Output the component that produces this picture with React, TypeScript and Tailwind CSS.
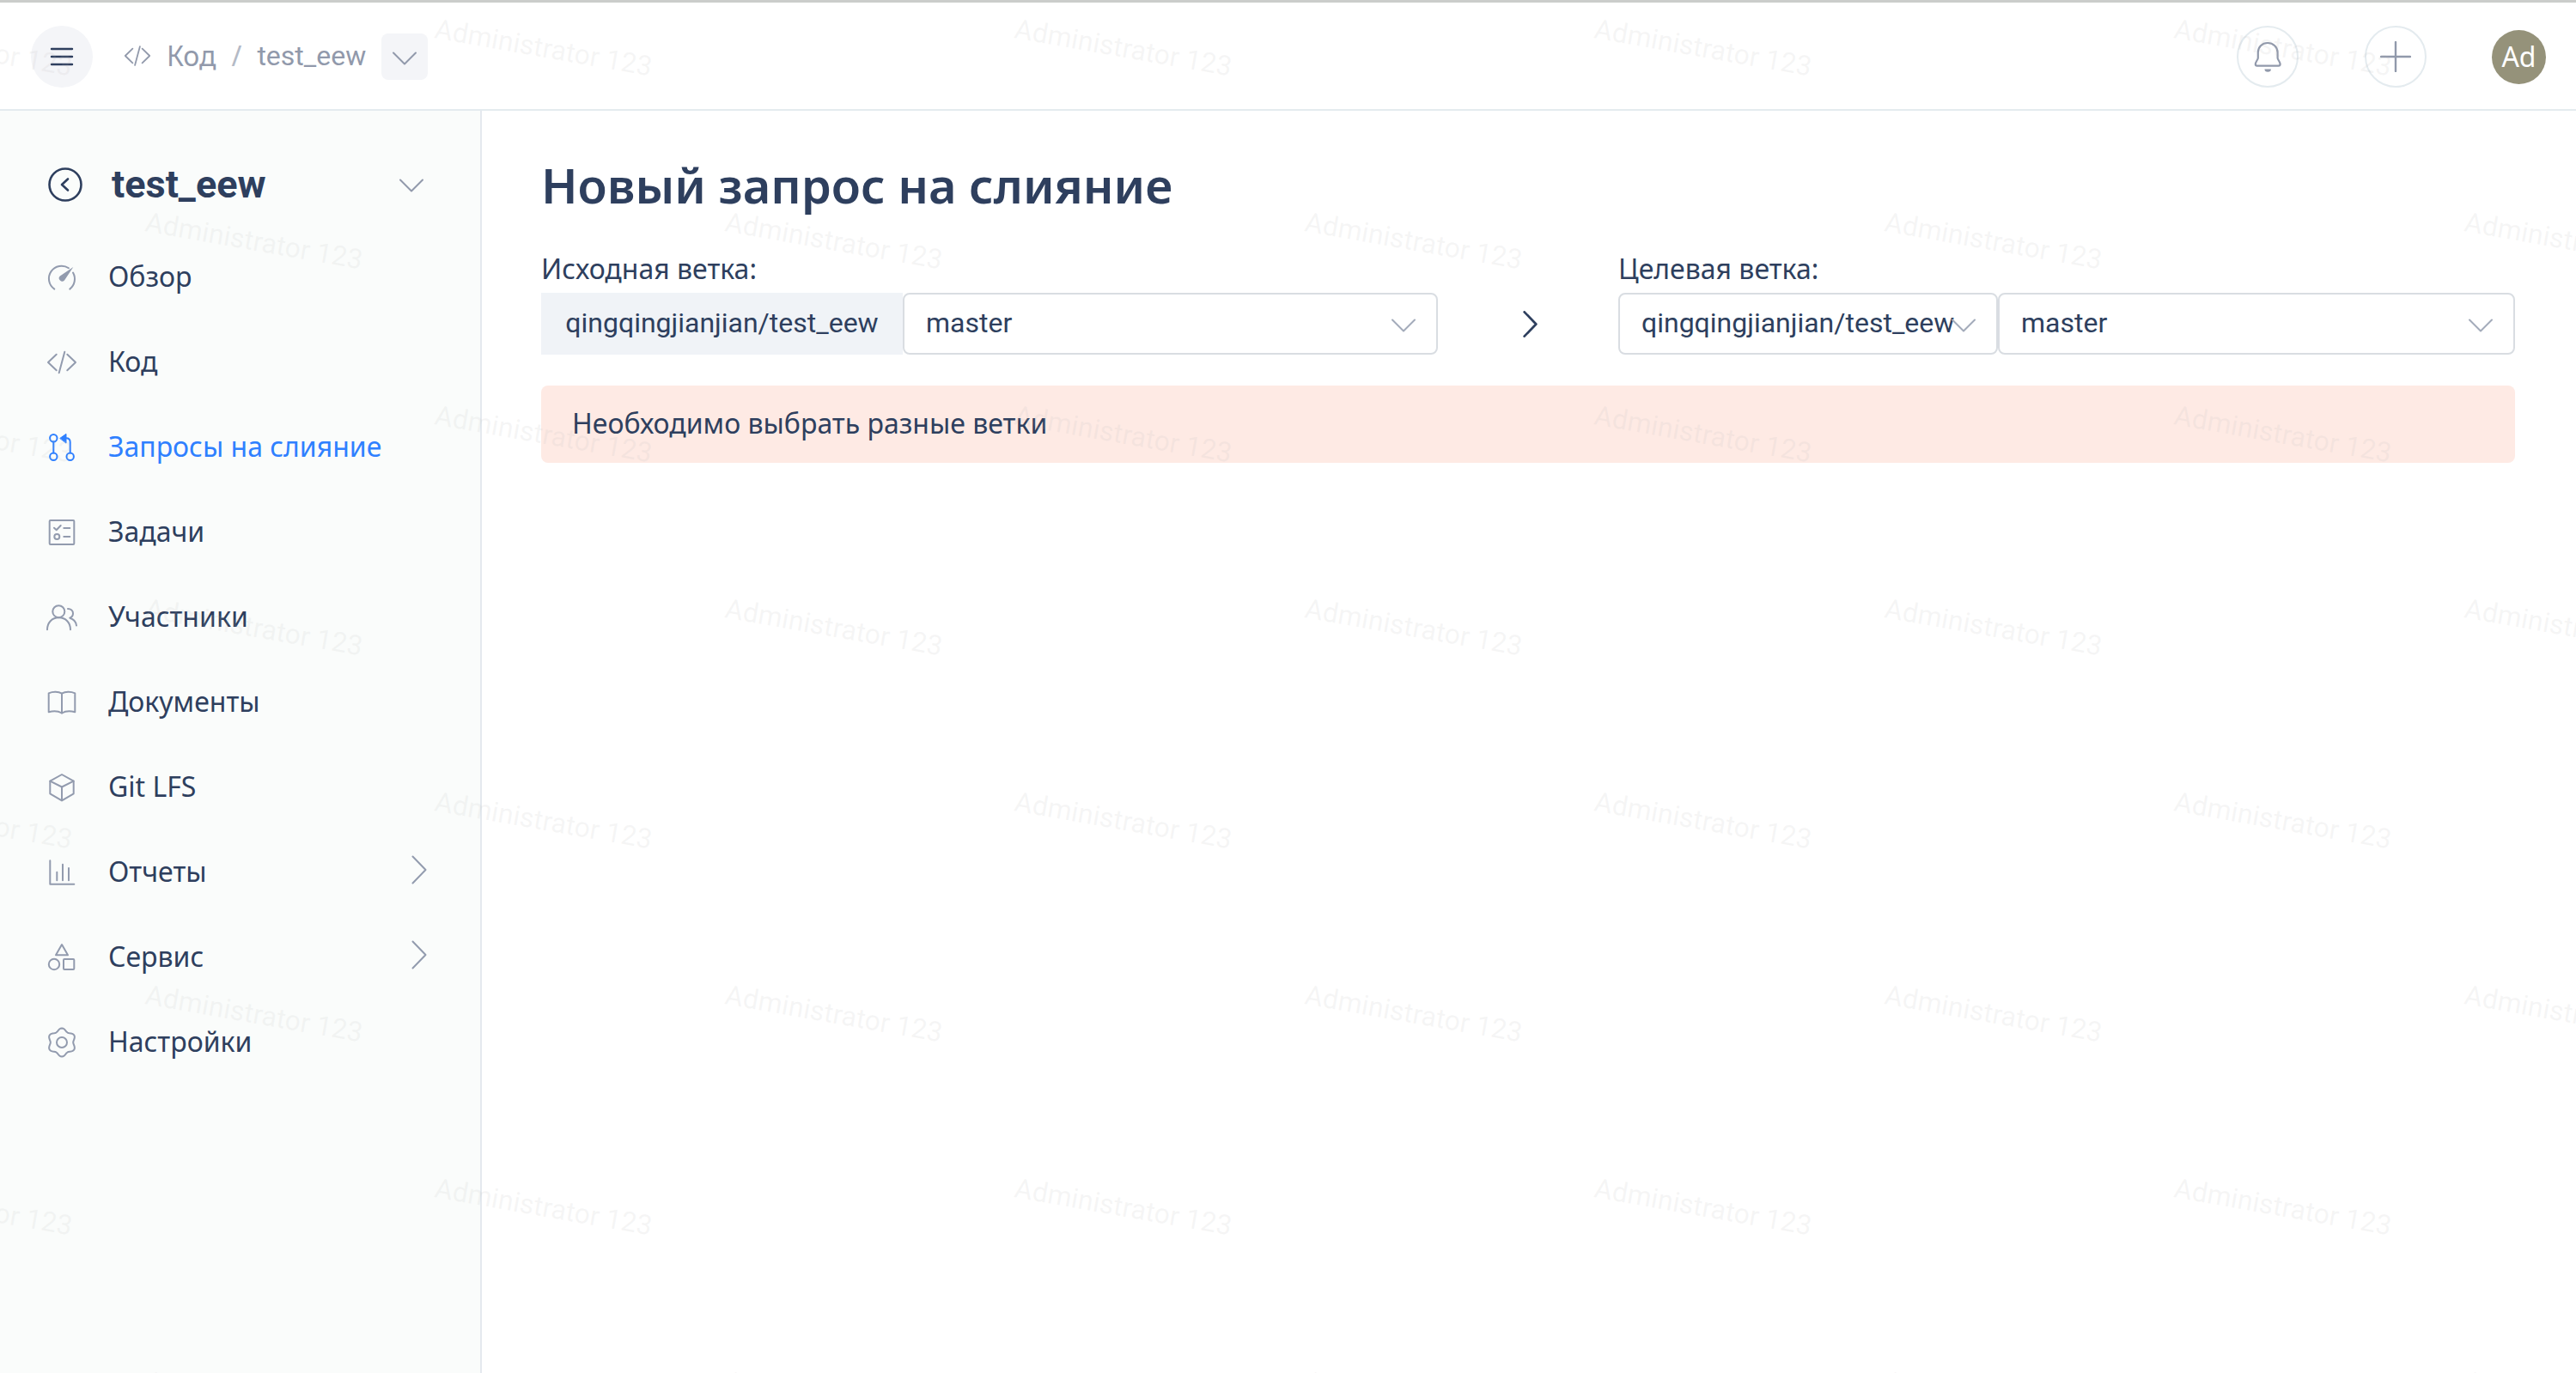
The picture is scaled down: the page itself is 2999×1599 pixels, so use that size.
import type { ReactNode } from "react";

function Icon({ children, className = "size-9" }: { children: ReactNode; className?: string }) {
  return (
    <svg
      viewBox="0 0 36 36"
      className={`${className} shrink-0`}
      fill="none"
      stroke="currentColor"
      strokeWidth="2"
      strokeLinecap="round"
      strokeLinejoin="round"
      aria-hidden="true"
    >
      {children}
    </svg>
  );
}

function ChevronDown({ className }: { className: string }) {
  return (
    <svg viewBox="0 0 28 16" className={className} fill="none" stroke="currentColor" strokeWidth="2" strokeLinecap="round" strokeLinejoin="round" aria-hidden="true">
      <path d="M1 1.5 14 14.5 27 1.5" />
    </svg>
  );
}

function ChevronRight({ className, strokeWidth = 2 }: { className: string; strokeWidth?: number }) {
  return (
    <svg viewBox="0 0 18 34" className={className} fill="none" stroke="currentColor" strokeWidth={strokeWidth} strokeLinecap="round" strokeLinejoin="round" aria-hidden="true">
      <path d="M1.5 1.5 16.5 17 1.5 32.5" />
    </svg>
  );
}

const codePaths = (
  <>
    <path d="M11.7 8.7 2 18l9.7 9.3" />
    <path d="M21.3 5.7 14.7 30.3" />
    <path d="M24.3 8.7 34 18l-9.7 9.3" />
  </>
);

// Six-lobed outline of the settings gear
const gearPath =
  Array.from({ length: 72 }, (_, i) => {
    const a = (i * Math.PI) / 36;
    const r = 14.9 + 1.7 * Math.cos(6 * (a - Math.PI / 2));
    return `${i ? "L" : "M"}${(18 + r * Math.cos(a)).toFixed(2)} ${(18 + r * Math.sin(a)).toFixed(2)}`;
  }).join("") + "Z";

const menu: { label: string; icon: ReactNode; active?: boolean; nested?: boolean }[] = [
  {
    label: "Обзор",
    icon: (
      <>
        <path d="M9.3 31.6A14.7 14.7 0 0 1 26 7.3" />
        <path d="M31 12.6A14.7 14.7 0 0 1 27.3 31.6" />
        <path d="M31.3 6 21 21.5a3.6 3.6 0 1 1-5.2-5Z" fill="currentColor" stroke="none" />
      </>
    ),
  },
  { label: "Код", icon: codePaths },
  {
    label: "Запросы на слияние",
    active: true,
    icon: (
      <>
        <circle cx="8.3" cy="7.3" r="4.2" />
        <circle cx="8.3" cy="28.7" r="4.2" />
        <circle cx="27.7" cy="28.7" r="4.2" />
        <path d="M8.3 11.5v13M27.7 24.5V12c0-3-1.7-4.7-4.7-4.7" />
        <path d="M16 7.3 23 2.3v10.4Z" fill="currentColor" strokeWidth="1" />
      </>
    ),
  },
  {
    label: "Задачи",
    icon: (
      <>
        <rect x="3.7" y="4" width="28.6" height="28" rx="1" />
        <path d="M9 12.7l2.7 2.5 5-5.2M20.3 13h7M20.3 23h7" />
        <circle cx="12.3" cy="23" r="3" />
      </>
    ),
  },
  {
    label: "Участники",
    icon: (
      <>
        <circle cx="14.3" cy="11.2" r="7" />
        <path d="M1 32.3C1 24 6.5 18.3 14.5 18.3S28 24 28 32.3" />
        <path d="M25 8c3.6 0 6 2.3 6 5.5 0 2.4-1.4 4.2-3.7 5.2 4.5 1.3 7.2 4.3 7.7 8.8" />
      </>
    ),
  },
  {
    label: "Документы",
    icon: (
      <>
        <path d="M18 7.7C14 5.2 7.5 5.2 2.7 7.3v22c5-1.3 11-1.3 15.3 1.2 4.3-2.5 10.3-2.5 15.3-1.2v-22C28.5 5.2 22 5.2 18 7.7Z" />
        <path d="M18 7.7v22.8" />
      </>
    ),
  },
  {
    label: "Git LFS",
    icon: (
      <>
        <path d="M18 3 31.7 10.7v14.6L18 33.3 4.3 25.3V10.7Z" />
        <path d="M4.3 10.7 18 17.5l13.7-6.8M18 17.5v15.8" />
      </>
    ),
  },
  {
    label: "Отчеты",
    nested: true,
    icon: <path d="M4.3 4.3v27.4h28M12.3 17.7v9.6M19 8.7v18.6M26 13v14.3" />,
  },
  {
    label: "Сервис",
    nested: true,
    icon: (
      <>
        <path d="M18 3 25 15.3H11Z" />
        <circle cx="9" cy="26" r="6.2" />
        <rect x="20" y="20" width="12.3" height="12" rx="1" />
      </>
    ),
  },
  {
    label: "Настройки",
    icon: (
      <>
        <path d={gearPath} />
        <circle cx="18" cy="18" r="6" />
      </>
    ),
  },
];

function Select({ id, label, value, className }: { id: string; label: string; value: string; className: string }) {
  return (
    <div className={`relative ${className}`}>
      <select
        id={id}
        aria-label={label}
        defaultValue={value}
        className="h-[72px] w-full appearance-none rounded-lg border-2 border-[#d9dde2] bg-white pr-6 pb-0.5 pl-[25px] font-['Roboto',sans-serif] text-[32px]"
      >
        <option>{value}</option>
      </select>
      <ChevronDown className="pointer-events-none absolute top-[30px] right-[26px] h-4 w-7 text-[#a3abba]" />
    </div>
  );
}

function Watermark() {
  return (
    <div aria-hidden="true" className="pointer-events-none absolute inset-0 overflow-hidden font-['Roboto',sans-serif] text-[32px] leading-8 text-[#b4b4b4]/12 select-none">
      {Array.from({ length: 8 }, (_, row) => (
        <div key={row} className={`flex h-[225px] pt-[17px] ${row % 2 ? "-ml-[508px]" : "-ml-[171px]"}`}>
          {Array.from({ length: 6 }, (_, col) => (
            <div key={col} className="w-[675px] shrink-0">
              <span className="inline-block origin-bottom-left rotate-10 whitespace-nowrap">Administrator 123</span>
            </div>
          ))}
        </div>
      ))}
    </div>
  );
}

export default function App() {
  return (
    <div className="relative flex min-h-screen flex-col overflow-hidden bg-white font-['Noto_Sans',sans-serif] text-[32px] leading-[48px] text-[#2e3f5e]">
      <header className="flex h-[129px] items-center border-t-3 border-b-2 border-t-[#cbcdcb] border-b-[#e4ebef] pt-0.5 pr-[35px] pl-9 text-[#9199ab]">
        <button aria-label="Меню" className="flex size-[72px] items-center justify-center rounded-full bg-[#f4f5f8] text-[#2e3f5e]">
          <Icon>
            <path d="M6 9h24M6 18h24M6 27h24" strokeWidth="2.4" />
          </Icon>
        </button>
        <nav aria-label="Навигация" className="ml-9 flex items-center pb-0.5">
          <a href="#code" className="flex items-center gap-[18px]">
            <Icon className="size-8">{codePaths}</Icon>
            <span>Код</span>
          </a>
          <span className="mx-[18px] text-[#b4bac6]">/</span>
          <a href="#repo" className="font-['Roboto',sans-serif]">test_eew</a>
        </nav>
        <button aria-label="Выбрать репозиторий" className="ml-[18px] flex size-[54px] items-center justify-center rounded-lg bg-[#f4f5f8]">
          <ChevronDown className="mt-1 h-4 w-7" />
        </button>
        <div className="ml-auto flex items-center">
          <button aria-label="Уведомления" className="flex size-[72px] items-center justify-center rounded-full border-2 border-[#e4ebef]">
            <Icon>
              <path d="M18 2C11.5 2 6.8 6.8 6.8 13v6.5c0 2-3 4.5-3 7.3 0 1.2.8 1.9 1.9 1.9h25c1.1 0 1.9-.7 1.9-1.9 0-2.8-3-5.3-3-7.3V13C29.6 6.8 24.5 2 18 2Z" strokeWidth="2.2" />
              <path d="M14.5 32.5h7.4a3.7 3.3 0 0 1-7.4 0Z" fill="currentColor" stroke="none" />
            </Icon>
          </button>
          <button aria-label="Создать" className="ml-[77px] flex size-[72px] items-center justify-center rounded-full border-2 border-[#e4ebef]">
            <Icon>
              <path d="M18 1v34M1 18h34" strokeWidth="2.4" />
            </Icon>
          </button>
          <button aria-label="Профиль" className="ml-[76px] flex size-[63px] items-center justify-center rounded-full bg-[#95927a] text-white">
            Ad
          </button>
        </div>
      </header>

      <div className="flex flex-1">
        <aside className="w-[561px] shrink-0 border-r-2 border-[#e4e9ee] bg-[#fafcfb]">
          <div className="flex h-36 items-center pt-7 pr-16 pl-14">
            <a href="#back" aria-label="Назад">
              <svg viewBox="0 0 40 40" className="size-10" fill="none" stroke="currentColor" strokeLinecap="round" strokeLinejoin="round" aria-hidden="true">
                <circle cx="20" cy="20" r="18.5" strokeWidth="2.6" />
                <path d="M23 13.5 16 20l7 6.5" strokeWidth="2.6" />
              </svg>
            </a>
            <span className="ml-[34px] font-['Roboto',sans-serif] text-[45px] font-bold">test_eew</span>
            <button aria-label="Показать репозитории" className="ml-auto text-[#9199ab]">
              <ChevronDown className="mt-0.5 mr-0.5 h-4 w-7" />
            </button>
          </div>
          <nav aria-label="Разделы репозитория">
            {menu.map(({ label, icon, active, nested }) => (
              <a
                key={label}
                href="#section"
                aria-current={active ? "page" : undefined}
                className={`flex h-[99px] items-center pr-[62px] pl-[54px] ${active ? "text-[#2f80ff]" : ""}`}
              >
                <span className={active ? "" : "text-[#929bae]"}>
                  <Icon>{icon}</Icon>
                </span>
                <span className="ml-9 pb-0.5">{label}</span>
                {nested && <ChevronRight className="mb-1.5 ml-auto h-[34px] w-[18px] text-[#929bae]" />}
              </a>
            ))}
          </nav>
        </aside>

        <main className="min-w-0 flex-1 pt-11 pr-[71px] pl-[69px]">
          <h1 className="text-[56px] leading-[84px] font-semibold">Новый запрос на слияние</h1>
          <div className="mt-8 flex items-end">
            <div className="flex-1">
              <label htmlFor="source-branch">Исходная ветка:</label>
              <div className="mt-1 flex">
                <div className="flex h-[72px] w-[421px] items-center justify-center bg-[#f0f3f7] pb-0.5 font-['Roboto',sans-serif]">
                  qingqingjianjian/test_eew
                </div>
                <Select id="source-branch" label="Исходная ветка" value="master" className="flex-1" />
              </div>
            </div>
            <div className="flex h-[72px] w-[210px] items-center justify-center">
              <ChevronRight className="ml-1 h-[31px] w-[17px]" strokeWidth={3} />
            </div>
            <div className="flex-1">
              <label htmlFor="target-repo">Целевая ветка:</label>
              <div className="mt-1 flex">
                <Select id="target-repo" label="Целевой репозиторий" value="qingqingjianjian/test_eew" className="w-[442px]" />
                <Select id="target-branch" label="Целевая ветка" value="master" className="flex-1" />
              </div>
            </div>
          </div>
          <div role="alert" className="mt-9 rounded-lg bg-[#feeae4] px-9 pt-5 pb-[22px]">
            Необходимо выбрать разные ветки
          </div>
        </main>
      </div>
      <Watermark />
    </div>
  );
}
